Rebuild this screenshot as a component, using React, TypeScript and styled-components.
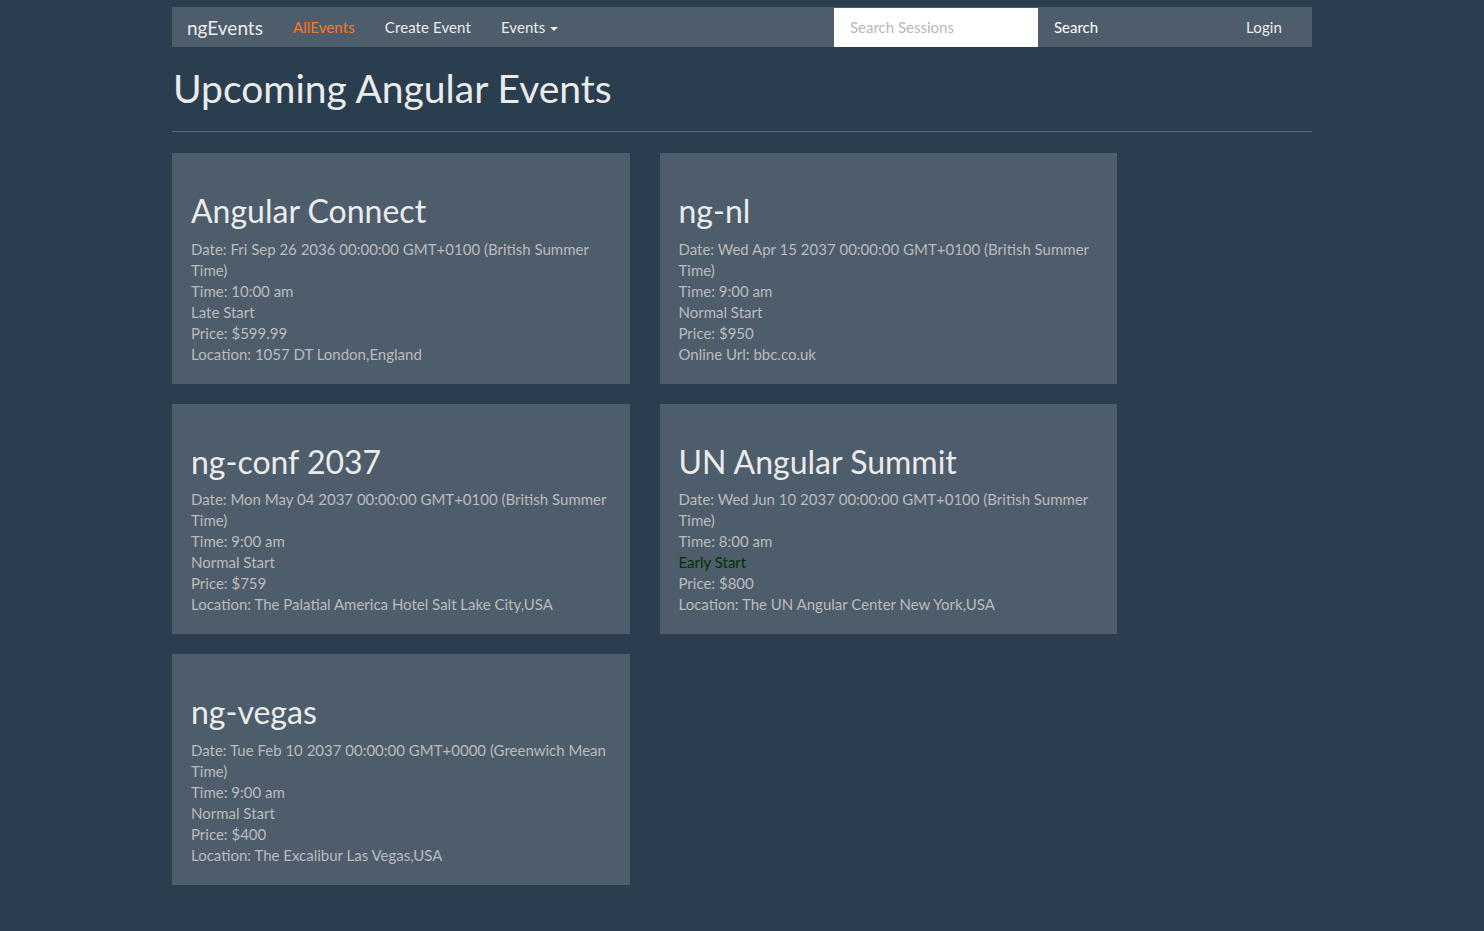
import React from "react";
import styled, { createGlobalStyle } from "styled-components";

const GlobalStyle = createGlobalStyle`
  html, body {
    margin: 0;
    padding: 0;
    background: #2b3e50;
    color: #ebebeb;
    font-family: Lato, "Open Sans", "Liberation Sans", sans-serif;
    font-size: 15px;
    line-height: 1.42857;
  }
  * { box-sizing: border-box; }
`;

const Page = styled.div`
  width: 1140px;
  margin: 0 auto;
  padding-top: 7px;
  padding-bottom: 40px;
`;

const Navbar = styled.nav`
  display: flex;
  align-items: stretch;
  height: 40px;
  background: #4e5d6c;
  padding-right: 15px;
`;

const Brand = styled.a`
  display: flex;
  align-items: center;
  padding: 1px 15px 0;
  font-size: 19px;
  color: #ebebeb;
  text-decoration: none;
`;

const NavList = styled.ul`
  display: flex;
  list-style: none;
  margin: 0;
  padding: 0;
`;

const NavLink = styled.a<{ $active?: boolean }>`
  display: flex;
  align-items: center;
  height: 100%;
  padding: 1px 15px 0;
  font-size: 15px;
  letter-spacing: 0.1px;
  color: ${(p) => (p.$active ? "#F97924" : "#ebebeb")};
  text-decoration: none;
`;

const Caret = styled.span`
  display: inline-block;
  width: 0;
  height: 0;
  margin-left: 5px;
  margin-top: 2px;
  border-top: 4px solid #ebebeb;
  border-left: 4px solid transparent;
  border-right: 4px solid transparent;
`;

const SearchForm = styled.form`
  display: flex;
  align-items: flex-start;
  margin-left: auto;
  margin-right: 117px;
`;

const SearchInput = styled.input`
  width: 204px;
  height: 39px;
  margin-top: 1px;
  border: none;
  padding: 7px 16px 8px;
  font-family: inherit;
  font-size: 15px;
  color: #2b3e50;
  background: #fff;
  outline: none;
  &::placeholder {
    color: #b8b8b8;
  }
`;

const SearchButton = styled.button`
  height: 39px;
  margin-top: 1px;
  padding: 7px 16px 8px;
  border: none;
  background: #4e5d6c;
  color: #fff;
  font-family: inherit;
  font-size: 15px;
`;

const Title = styled.h1`
  font-size: 39px;
  font-weight: 400;
  line-height: 1.1;
  margin: 20px 0 0 1px;
  color: #ebebeb;
`;

const Rule = styled.hr`
  border: 0;
  border-top: 1px solid #596a7b;
  margin: 21px 0 21px;
`;

const Grid = styled.div`
  display: grid;
  grid-template-columns: 457.5px 457.5px;
  column-gap: 30px;
  row-gap: 20px;
  align-items: start;
`;

const Well = styled.div`
  background: #4e5d6c;
  padding: 19px;
`;

const CardTitle = styled.h2`
  font-size: 32px;
  font-weight: 400;
  line-height: 1.1;
  margin: 21px 0 10.5px;
  color: #ebebeb;
`;

const Line = styled.div<{ $early?: boolean }>`
  color: ${(p) => (p.$early ? "#003300" : "#bbb")};
  font-size: 15px;
  line-height: 21px;
`;

type Ev = {
  name: string;
  date: string;
  time: string;
  start: string;
  price: string;
  location?: string;
  url?: string;
};

const events: Ev[] = [
  {
    name: "Angular Connect",
    date: "Fri Sep 26 2036 00:00:00 GMT+0100 (British Summer Time)",
    time: "10:00 am",
    start: "Late Start",
    price: "$599.99",
    location: "1057 DT London,England",
  },
  {
    name: "ng-nl",
    date: "Wed Apr 15 2037 00:00:00 GMT+0100 (British Summer Time)",
    time: "9:00 am",
    start: "Normal Start",
    price: "$950",
    url: "bbc.co.uk",
  },
  {
    name: "ng-conf 2037",
    date: "Mon May 04 2037 00:00:00 GMT+0100 (British Summer Time)",
    time: "9:00 am",
    start: "Normal Start",
    price: "$759",
    location: "The Palatial America Hotel Salt Lake City,USA",
  },
  {
    name: "UN Angular Summit",
    date: "Wed Jun 10 2037 00:00:00 GMT+0100 (British Summer Time)",
    time: "8:00 am",
    start: "Early Start",
    price: "$800",
    location: "The UN Angular Center New York,USA",
  },
  {
    name: "ng-vegas",
    date: "Tue Feb 10 2037 00:00:00 GMT+0000 (Greenwich Mean Time)",
    time: "9:00 am",
    start: "Normal Start",
    price: "$400",
    location: "The Excalibur Las Vegas,USA",
  },
];

export default function App() {
  return (
    <>
      <GlobalStyle />
      <Page>
        <Navbar>
          <Brand>ngEvents</Brand>
          <NavList>
            <li><NavLink $active>AllEvents</NavLink></li>
            <li><NavLink>Create Event</NavLink></li>
            <li>
              <NavLink>
                Events<Caret />
              </NavLink>
            </li>
          </NavList>
          <SearchForm onSubmit={(e) => e.preventDefault()}>
            <SearchInput placeholder="Search Sessions" />
            <SearchButton type="button">Search</SearchButton>
          </SearchForm>
          <NavList>
            <li><NavLink>Login</NavLink></li>
          </NavList>
        </Navbar>
        <Title>Upcoming Angular Events</Title>
        <Rule />
        <Grid>
          {events.map((ev) => (
            <Well key={ev.name}>
              <CardTitle>{ev.name}</CardTitle>
              <Line>Date: {ev.date}</Line>
              <Line>Time: {ev.time}</Line>
              <Line $early={ev.start === "Early Start"}>{ev.start}</Line>
              <Line>Price: {ev.price}</Line>
              {ev.location && <Line>Location: {ev.location}</Line>}
              {ev.url && <Line>Online Url: {ev.url}</Line>}
            </Well>
          ))}
        </Grid>
      </Page>
    </>
  );
}
